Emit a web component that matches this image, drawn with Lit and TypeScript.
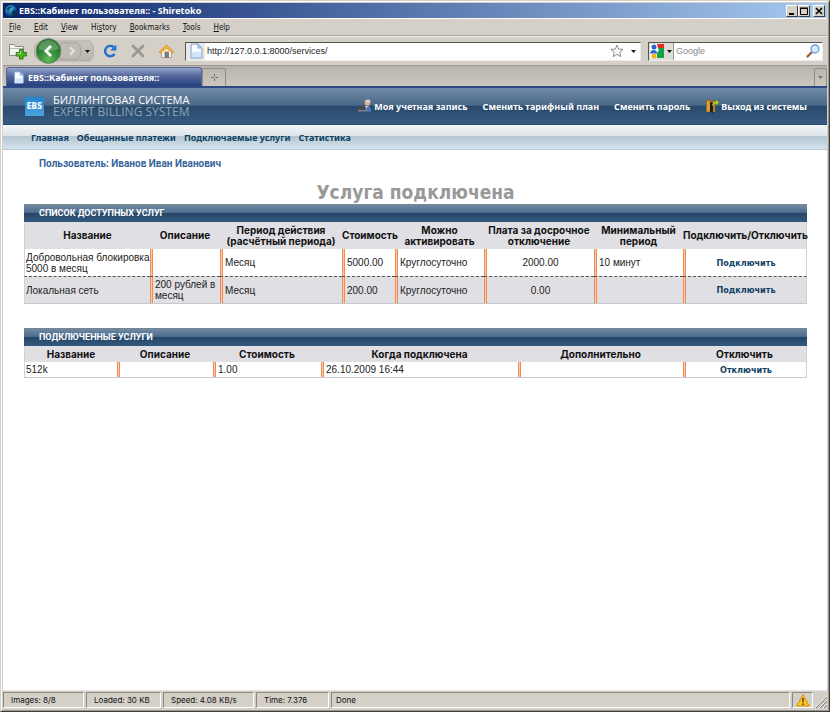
import { LitElement, html, css, svg } from "lit";
import { customElement } from "lit/decorators.js";
import { classMap } from "lit/directives/class-map.js";

const pageIcon = html`<svg class="ico16" viewBox="0 0 16 16" aria-hidden="true">
  <path d="M3 1h7l4 4v10H3z" fill="#e4f0fc" stroke="#7aa2d0" />
  <path d="M4 2h5.500v4H13v8H4z" fill="#f6fbff" />
  <path d="M4 9h9v5H4z" fill="#cfe4fa" />
  <path d="M10 1v4h4z" fill="#b4d2f2" stroke="#7aa2d0" stroke-width=".8" />
</svg>`;

const caret = html`<svg class="caret" viewBox="0 0 5 3" aria-hidden="true"><path d="M0 0h5L2.500 3z" fill="currentColor" /></svg>`;

const globeIcon = html`<svg class="ico14" viewBox="0 0 14 14" aria-hidden="true">
  <defs>
    <radialGradient id="globe" cx=".4" cy=".3" r=".8">
      <stop offset="0" stop-color="#58c8e8" /><stop offset=".5" stop-color="#1468a8" /><stop offset="1" stop-color="#04162c" />
    </radialGradient>
  </defs>
  <circle cx="7" cy="7" r="6" fill="url(#globe)" />
  <path d="M3 4c2-2 4-2 5-1l-2 2-1 2-2-1zM8 7l3-1 1 2-2 3-2-1z" fill="#062040" opacity=".7" />
</svg>`;

const newTabIcon = html`<svg class="ico18" viewBox="0 0 18 18" aria-hidden="true">
  <path d="M.5 2.500h5l1 2h8v9H.5z" fill="#f4f4f2" stroke="#8a8c88" />
  <path d="M1 6.500h13" stroke="#b8bab6" />
  <path d="M10.500 7.500h3.500v3h3.300V14H14v3h-3.500v-3H7.200v-3.500h3.300z" fill="#4fb321" stroke="#2c7a10" />
  <path d="M11.700 8.700v3H8.400" stroke="#a6e27c" fill="none" />
</svg>`;

const navIcon = html`<svg class="navpic" viewBox="0 0 60 26" aria-hidden="true">
  <defs>
    <radialGradient id="ball" cx=".5" cy=".85" r=".8">
      <stop offset="0" stop-color="#62b85c" /><stop offset=".6" stop-color="#2c8330" /><stop offset="1" stop-color="#236c28" />
    </radialGradient>
    <linearGradient id="pill" x2="0" y2="1">
      <stop offset="0" stop-color="#c8c4bc" /><stop offset="1" stop-color="#bab6ae" />
    </linearGradient>
  </defs>
  <path d="M8 3h48q4 4 4 10t-4 10H8Q0 22 0 13T8 3z" fill="url(#pill)" stroke="#b0aca4" />
  <path d="M26 5h18q3 3 3 8t-3 8H26z" fill="#c0bcb4" stroke="#a8a49c" />
  <path d="M36 9.500l4 3.500-4 3.500" fill="none" stroke="#e6e4e0" stroke-width="2.200" />
  <circle cx="14.500" cy="13" r="12.300" fill="url(#ball)" stroke="#5c8a5c" />
  <path d="M4.500 11a10 9 0 0 1 20 0q-10 4-20 0z" fill="#fff" opacity=".24" />
  <path d="M17 8l-5 5 5 5" fill="none" stroke="#fff" stroke-width="2.800" />
  <path d="M51 12h5l-2.500 3z" fill="#111" />
</svg>`;

const reloadIcon = html`<svg class="ico16" viewBox="0 0 16 16" aria-hidden="true">
  <path d="M12.600 11A5.200 5.200 0 1 1 11.600 4" fill="none" stroke="#1f6fd0" stroke-width="2.400" />
  <path d="M14.300 1.500v6H8.300z" fill="#1f6fd0" />
</svg>`;

const stopIcon = html`<svg class="ico16" viewBox="0 0 16 16" aria-hidden="true">
  <path d="M3 3l10 10M13 3L3 13" stroke="#9a978f" stroke-width="2.800" stroke-linecap="round" />
</svg>`;

const homeIcon = html`<svg class="ico16" viewBox="0 0 16 16" aria-hidden="true">
  <path d="M3.500 8v6.500h10V8L8.500 4z" fill="#f8f4ea" stroke="#a8a498" />
  <path d="M1.200 9L8.500 2l7.200 7-1.200 1-6-4.800L2.400 10z" fill="#fcb93a" stroke="#c88a1c" stroke-width=".8" />
  <rect x="7" y="9" width="3.500" height="5.500" fill="#4d86c6" stroke="#a86a30" stroke-width=".8" />
</svg>`;

const starIcon = html`<svg class="ico14" viewBox="0 0 14 14" aria-hidden="true">
  <path d="M7 1l1.700 4.100 4.400.3-3.400 2.900 1.100 4.400L7 10.300l-3.800 2.400 1.100-4.400L.9 5.400l4.400-.3z" fill="#fdfdfd" stroke="#8c8c8c" />
</svg>`;

const googleIcon = html`<svg class="ico14" viewBox="0 0 14 14" aria-hidden="true">
  <rect width="14" height="14" fill="#fff" />
  <path d="M7 0h7v4H8z" fill="#e22a1e" /><path d="M8 4h6v10H7V9z" fill="#15a048" />
  <circle cx="4" cy="3" r="2.500" fill="#2a62d0" /><path d="M0 9q1-3 3.500-3T7 8v1.500H0z" fill="#2a62d0" />
  <circle cx="4" cy="12" r="2.600" fill="#f2b41c" /><path d="M7 3l2 3-2 3z" fill="#fff" />
</svg>`;

const searchIcon = html`<svg class="ico14" viewBox="0 0 14 14" aria-hidden="true">
  <path d="M1.500 12.500L6 8" stroke="#9c6038" stroke-width="2.400" stroke-linecap="round" />
  <circle cx="9" cy="5" r="4" fill="#cfe8fb" stroke="#6c9cd8" stroke-width="1.300" />
  <path d="M6.500 4.500q1-2 3-2" stroke="#fff" fill="none" />
</svg>`;

const userIcon = html`<svg class="ico14" viewBox="0 0 14 14" aria-hidden="true">
  <path d="M6 11l1-4h3l2 2 .5 3H7z" fill="#c4d0e2" /><path d="M8.500 8h2.500l2 5H9z" fill="#3d6cc0" />
  <circle cx="9.500" cy="4" r="2.600" fill="#e8b090" /><path d="M6.500 3.500q.5-3 3.500-3T12.500 4Q11 2 9 2.500t-2.500 1z" fill="#d8d4d0" />
  <path d="M0 7h7l1.500 4H0z" fill="#42484e" /><path d="M0 11h8.500v1.500H0z" fill="#7c838a" />
</svg>`;

const exitIcon = html`<svg class="ico14" viewBox="0 0 14 14" aria-hidden="true">
  <path d="M1 1h9v12H1z" fill="#9a6a24" /><path d="M2 2h3v10.500H2z" fill="#d89c40" />
  <path d="M5 3l3 1v10l-3-1z" fill="#241a10" /><path d="M8 3h2v10H8z" fill="#b88030" />
  <path d="M7 6.500q1-4 4-4V.8L14 3.500l-3 2.700V4.600Q9 4.500 8 6.500z" fill="#b8e020" stroke="#6c9810" stroke-width=".4" />
</svg>`;

const warnIcon = html`<svg class="ico14" viewBox="0 0 14 14" aria-hidden="true">
  <path d="M7 1.500L13.300 13H.7z" fill="#fcc41c" stroke="#d89010" stroke-linejoin="round" />
  <path d="M6.200 5h1.600l-.3 4.500h-1zM6.300 10.500h1.400v1.400H6.300z" fill="#333" />
</svg>`;

const grip = html`<svg class="ico12" viewBox="0 0 12 12" aria-hidden="true">
  ${[1, 5, 9].map((o) => svg`<path d="M${o} 12L12 ${o}" stroke="#85817a" stroke-width="1.200" /><path d="M${o - 1} 12L12 ${o - 1}" stroke="#fff" stroke-width=".8" />`)}
</svg>`;

interface Cell { text: string; link?: boolean; center?: boolean }
const t = (text: string): Cell => ({ text });
const a = (text: string): Cell => ({ text, link: true, center: true });

@customElement("services-table")
export class ServicesTable extends LitElement {
  static properties = {
    caption: { type: String },
    cols: { attribute: false },
    heads: { attribute: false },
    rows: { attribute: false },
  };
  declare caption: string;
  declare cols: number[];
  declare heads: string[];
  declare rows: Cell[][];

  static styles = css`
    :host { display: block; }
    table { width: 100%; table-layout: fixed; border-collapse: separate; border-spacing: 0; font: 10px/11px "Liberation Sans", Arial, sans-serif; color: #222; }
    caption {
      box-sizing: border-box; height: 18px; padding-left: 15px; border-top: 1px solid #76858f;
      font: bold 9px/17px Roboto, sans-serif; text-align: left; color: #fff;
      background: linear-gradient(#7089a3, #4c6c8d 45%, #264668 50%, #34597f);
    }
    th { height: 25px; padding: 1px 0; background: #e0dfe4; color: #111; white-space: pre; font-family: Inter, sans-serif; }
    .short th { height: 14px; }
    td { height: 25px; padding: 1px 2px; vertical-align: middle; }
    td:first-child { padding: 1px 0 1px 1px; }
    .short td { height: 13px; }
    td + td {
      padding-left: 5px;
      background: linear-gradient(90deg, #f08c58 1px, #ffc8a4 1px 2px, #f08c58 2px) no-repeat left / 3px 100%;
    }
    .alt { background: #e0dfe4; }
    .alt td { height: 24px; border-top: 1px dashed #555; }
    tr > :first-child { border-left: 1px solid #d2d2d6; }
    tr > :last-child { border-right: 1px solid #d2d2d6; }
    tbody tr:last-child td { border-bottom: 1px solid #c8c8cc; }
    .center { text-align: center; }
    a { color: #0f4263; font: bold 9px/11px "DejaVu Sans Condensed", sans-serif; text-decoration: none; }
  `;

  render() {
    const total = this.cols.reduce((s, c) => s + c, 0);
    const short = this.rows.length === 1;
    return html`<table class=${classMap({ short })}>
      <caption>${this.caption}</caption>
      <colgroup>${this.cols.map((c) => html`<col style="width:${(c / total) * 100}%" />`)}</colgroup>
      <thead><tr>${this.heads.map((h) => html`<th scope="col">${h}</th>`)}</tr></thead>
      <tbody>${this.rows.map((r, i) => html`<tr class=${classMap({ alt: i % 2 === 1 })}>
        ${r.map((c) => html`<td class=${classMap({ center: !!c.center })}>${c.link ? html`<a href="#">${c.text}</a>` : c.text}</td>`)}
      </tr>`)}</tbody>
    </table>`;
  }
}

@customElement("app-root")
export class AppRoot extends LitElement {
  static styles = css`
    :host {
      display: flex; flex-direction: column; box-sizing: border-box; min-height: 100vh;
      border: 1px solid #d4d0c8; border-right-color: #404040; border-bottom-color: #404040;
      background: #d4d0c8; color: #111;
      font-family: "DejaVu Sans Condensed", "DejaVu Sans", sans-serif; font-size: 9px;
    }
    .frame { flex: 1; display: flex; flex-direction: column; padding: 1px; border: 1px solid #fff; border-right-color: #9a968e; border-bottom-color: #9a968e; }
    button { font: inherit; color: inherit; border: 0; padding: 0; background: none; }
    svg { display: block; flex: none; }
    .ico12 { width: 12px; height: 12px; }
    .ico14 { width: 14px; height: 14px; }
    .ico16 { width: 16px; height: 16px; }
    .ico18 { width: 18px; height: 18px; }
    .navpic { width: 60px; height: 26px; }
    .caret { width: 5px; height: 3px; }

    .title { display: flex; align-items: center; gap: 1px; height: 15px; padding: 0 2px 0 1px; color: #fff; font: bold 9px "Noto Sans", sans-serif; background: linear-gradient(90deg, #0a246a, #a6caf0); }
    .title span { flex: 1; }
    .wb { box-sizing: border-box; width: 12px; height: 12px; background: #d4d0c8; border: 1px solid; border-color: #fff #404040 #404040 #fff; display: grid; place-items: center; }
    .wb svg { width: 8px; height: 8px; }
    .pair { display: flex; margin-right: 2px; }
    .menu { display: flex; gap: 13px; align-items: center; height: 16px; padding: 0 6px; border-top: 1px solid #fff; border-bottom: 1px solid #a8a49c; font-size: 8px; }
    .menu span::first-letter { text-decoration: underline; }
    .tools { display: flex; align-items: center; height: 28px; padding: 0 4px 0 6px; border-top: 1px solid #f0eeea; border-bottom: 1px solid #9c988f; }
    .back { margin-left: 7px; }
    .group { display: flex; align-items: center; gap: 12px; margin: 0 11px 0 8px; }
    .box { display: flex; align-items: center; box-sizing: border-box; height: 19px; background: #fff; border: 1px solid; border-color: #55534f #efede8 #efede8 #55534f; }
    .url { flex: 1; gap: 7px; padding-right: 4px; }
    .site { display: grid; place-items: center; width: 19px; height: 17px; margin-right: -5px; background: #ebe9e4; }
    input { min-width: 0; flex: 1; border: 0; padding: 0; outline: 0; background: none; font: 9px "Liberation Sans", Arial, sans-serif; color: #222; }
    input::placeholder { color: #888; opacity: 1; }
    .search { width: 175px; margin-left: 7px; padding-right: 2px; gap: 2px; }
    .engine { display: flex; align-items: center; gap: 3px; height: 17px; padding: 0 1px; background: #e0ddd6; border-right: 1px solid #999; }

    .tabs { display: flex; align-items: flex-end; height: 20px; padding-left: 3px; background: linear-gradient(#b8b4ac, #ccc8c0); border-bottom: 2px solid #2f4a86; }
    .tab { display: flex; align-items: center; gap: 3px; box-sizing: border-box; width: 196px; height: 19px; padding-left: 5px; border: 1px solid #5a6890; border-bottom: 0; border-radius: 3px 3px 0 0; color: #fff; font: bold 9px "Noto Sans", sans-serif; background: linear-gradient(#93a3cd, #53689c 45%, #263f7c); }
    .tab svg { width: 13px; height: 13px; }
    .add { width: 24px; height: 18px; display: grid; place-items: center; border: 1px solid #928e86; border-bottom: 0; border-radius: 2px 2px 0 0; color: #777; }
    .more { width: 13px; margin-left: auto; }

    .page { flex: 1; background: #fff; }
    .head { display: flex; align-items: center; justify-content: space-between; box-sizing: border-box; height: 37px; padding: 0 20px 0 22px; border-bottom: 1px solid #2a4b6d; color: #fff; background: linear-gradient(#6f8aa7, #4b6888 48%, #29496a 50%, #365a82); }
    .logo { display: flex; align-items: center; gap: 9px; }
    .mark { display: grid; place-items: center; width: 19px; height: 19px; background: linear-gradient(#2585cc, #48a3dc); font-size: 8px; font-weight: bold; }
    .words { font: 11px/12px "Open Sans", "Noto Sans", sans-serif; }
    .words .sub { font-size: 12px; color: #8ba2b6; }
    .links, .nav { font: bold 9px "Noto Sans", sans-serif; }
    .links { display: flex; gap: 15px; }
    .links a { display: flex; align-items: center; gap: 2px; }
    a { color: inherit; text-decoration: none; }
    .nav { display: flex; gap: 8px; align-items: center; box-sizing: border-box; height: 25px; padding: 0 28px; border-bottom: 1px solid #bac8d2; color: #0f4263; background: linear-gradient(#f3f6f8, #dde4e9 45%, #b4c6d0 48%, #d4e5f0); }
    .content { padding: 7px 20px 0 21px; }
    .who { margin: 0 15px; font: bold 10px/13px Roboto, sans-serif; color: #38659a; }
    h1 { margin: 10px 0 0; font-size: 19px; line-height: 24px; text-align: center; color: #999; }
    services-table + services-table { margin-top: 24px; }

    .status { display: flex; gap: 2px; height: 17px; padding-top: 1px; font: 8px Inter, sans-serif; border-top: 1px solid #e8e6e0; }
    .status > span { display: flex; align-items: center; box-sizing: border-box; height: 16px; padding-left: 7px; border: 1px solid; border-color: #8c8880 #fff #fff #8c8880; }
    .w1 { width: 81px; } .w2 { width: 75px; } .w3 { width: 91px; } .w4 { width: 73px; }
    .status .w5 { flex: 1; padding-left: 4px; }
    .status .w6 { width: 21px; padding-left: 3px; }
    .status .ico12 { margin-top: 4px; }
  `;

  render() {
    return html`<div class="frame">
      <div class="title">${globeIcon}<span>EBS::Кабинет пользователя:: - Shiretoko</span>
        <div class="pair">
          <button class="wb" aria-label="Minimize"><svg viewBox="0 0 8 8"><path d="M1 6h5v2H1z" /></svg></button>
          <button class="wb" aria-label="Maximize"><svg viewBox="0 0 8 8"><path d="M.5 1.500h7v6h-7zM0 1h8" fill="none" stroke="#000" /></svg></button>
        </div>
        <button class="wb" aria-label="Close"><svg viewBox="0 0 8 8"><path d="M1 1l6 6M7 1L1 7" stroke="#000" stroke-width="1.600" /></svg></button>
      </div>
      <div class="menu"><span>File</span><span>Edit</span><span>View</span><div>Hi<u>s</u>tory</div><span>Bookmarks</span><span>Tools</span><span>Help</span></div>
      <div class="tools">
        <button aria-label="New tab">${newTabIcon}</button>
        <button class="back" aria-label="Back">${navIcon}</button>
        <div class="group">
          <button aria-label="Reload">${reloadIcon}</button>
          <button aria-label="Stop">${stopIcon}</button>
          <button aria-label="Home">${homeIcon}</button>
        </div>
        <div class="box url"><div class="site">${pageIcon}</div><input aria-label="Address" value="http://127.0.0.1:8000/services/" />
          <button aria-label="Bookmark">${starIcon}</button><button aria-label="History">${caret}</button></div>
        <div class="box search"><button class="engine" aria-label="Search engine">${googleIcon}${caret}</button>
          <input aria-label="Search" placeholder="Google" /><button aria-label="Search">${searchIcon}</button></div>
      </div>
      <div class="tabs">
        <button class="tab">${pageIcon}EBS::Кабинет пользователя::</button>
        <button class="add" aria-label="Open new tab"><svg width="7" height="7" viewBox="0 0 7 7"><path d="M3.500 0v2.500M3.500 4.500V7M0 3.500h2.500M4.500 3.500H7" stroke="#666" /></svg></button>
        <button class="add more" aria-label="All tabs">${caret}</button>
      </div>
      <div class="page">
        <header class="head">
          <div class="logo"><div class="mark">EBS</div><div class="words"><div>БИЛЛИНГОВАЯ СИСТЕМА</div><div class="sub">EXPERT BILLING SYSTEM</div></div></div>
          <div class="links"><a href="#">${userIcon}Моя учетная запись</a><a href="#">Сменить тарифный план</a><a href="#">Сменить пароль</a><a href="#">${exitIcon}Выход из системы</a></div>
        </header>
        <nav class="nav"><a href="#">Главная</a><a href="#">Обещанные платежи</a><a href="#">Подключаемые услуги</a><a href="#">Статистика</a></nav>
        <main class="content">
          <div class="who">Пользователь: Иванов Иван Иванович</div>
          <h1>Услуга подключена</h1>
          <services-table
            .caption=${"СПИСОК ДОСТУПНЫХ УСЛУГ"}
            .cols=${[126, 70, 122, 53, 89, 110, 89, 124]}
            .heads=${["Название", "Описание", "Период действия\n(расчётный периода)", "Стоимость", "Можно\nактивировать", "Плата за досрочное\nотключение", "Минимальный\nпериод", "Подключить/Отключить"]}
            .rows=${[
              [t("Добровольная блокировка 5000 в месяц"), t(""), t("Месяц"), t("5000.00"), t("Круглосуточно"), { text: "2000.00", center: true }, t("10 минут"), a("Подключить")],
              [t("Локальная сеть"), t("200 рублей в месяц"), t("Месяц"), t("200.00"), t("Круглосуточно"), { text: "0.00", center: true }, t(""), a("Подключить")],
            ]}
          ></services-table>
          <services-table
            .caption=${"ПОДКЛЮЧЕННЫЕ УСЛУГИ"}
            .cols=${[93, 96, 108, 197, 165, 124]}
            .heads=${["Название", "Описание", "Стоимость", "Когда подключена", "Дополнительно", "Отключить"]}
            .rows=${[[t("512k"), t(""), t("1.00"), t("26.10.2009 16:44"), t(""), a("Отключить")]]}
          ></services-table>
        </main>
      </div>
      <footer class="status"><span class="w1">Images: 8/8</span><span class="w2">Loaded: 30 KB</span><span class="w3">Speed: 4.08 KB/s</span><span class="w4">Time: 7.376</span><span class="w5">Done</span><span class="w6">${warnIcon}</span>${grip}</footer>
    </div>`;
  }
}
